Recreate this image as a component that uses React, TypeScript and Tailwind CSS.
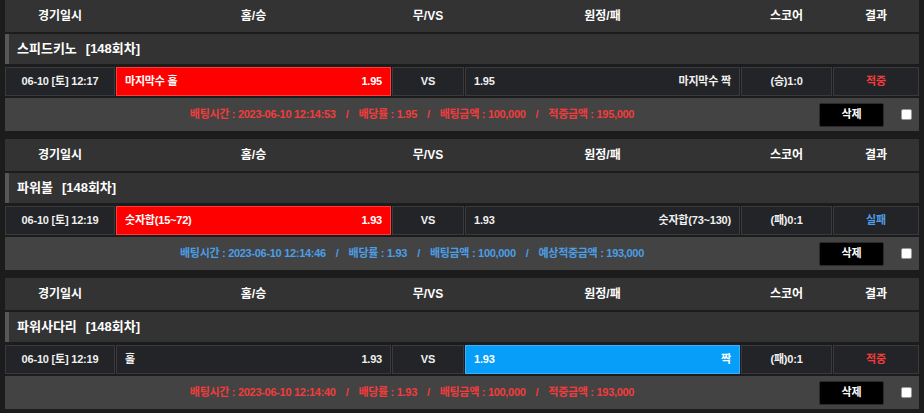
import React from 'react';

type Bet = {
  game: string;
  round: string;
  date: string;
  home: string;
  homeOdds: string;
  away: string;
  awayOdds: string;
  pick: 'home' | 'away';
  score: string;
  result: string;
  won: boolean;
  betTime: string;
  odds: string;
  amount: string;
  payoutLabel: string;
  payout: string;
};

const bets: Bet[] = [
  {
    game: '스피드키노',
    round: '[148회차]',
    date: '06-10 [토] 12:17',
    home: '마지막수 홀',
    homeOdds: '1.95',
    away: '마지막수 짝',
    awayOdds: '1.95',
    pick: 'home',
    score: '(승)1:0',
    result: '적중',
    won: true,
    betTime: '2023-06-10 12:14:53',
    odds: '1.95',
    amount: '100,000',
    payoutLabel: '적중금액',
    payout: '195,000',
  },
  {
    game: '파워볼',
    round: '[148회차]',
    date: '06-10 [토] 12:19',
    home: '숫자합(15~72)',
    homeOdds: '1.93',
    away: '숫자합(73~130)',
    awayOdds: '1.93',
    pick: 'home',
    score: '(패)0:1',
    result: '실패',
    won: false,
    betTime: '2023-06-10 12:14:46',
    odds: '1.93',
    amount: '100,000',
    payoutLabel: '예상적중금액',
    payout: '193,000',
  },
  {
    game: '파워사다리',
    round: '[148회차]',
    date: '06-10 [토] 12:19',
    home: '홀',
    homeOdds: '1.93',
    away: '짝',
    awayOdds: '1.93',
    pick: 'away',
    score: '(패)0:1',
    result: '적중',
    won: true,
    betTime: '2023-06-10 12:14:40',
    odds: '1.93',
    amount: '100,000',
    payoutLabel: '적중금액',
    payout: '193,000',
  },
];

const cols = ['w-[110px]', 'w-[275px]', 'w-[72px]', 'w-[275px]', 'w-[91px]', 'flex-1'];

function HeaderRow() {
  const labels = ['경기일시', '홈/승', '무/VS', '원정/패', '스코어', '결과'];
  return (
    <div className="flex gap-[1px] h-[32px] bg-[#333333] text-[12px] font-bold text-white">
      {labels.map((l, i) => (
        <div key={l} className={`${cols[i]} flex items-center justify-center`}>{l}</div>
      ))}
    </div>
  );
}

function BetBlock({ bet }: { bet: Bet }) {
  const cell = 'h-[29px] flex items-center border border-[#383a3d] bg-[#232427]';
  const homeSel = bet.pick === 'home';
  const awaySel = bet.pick === 'away';
  const textColor = bet.won ? 'text-[#f23c3c]' : 'text-[#4c9ee6]';

  return (
    <div className="flex flex-col">
      <HeaderRow />
      <div className="mt-[2px] h-[30px] bg-[#333333] border-l-[4px] border-[#575757] flex items-center pl-[8px] text-[13px] font-bold text-white">
        <span>{bet.game}</span>
        <span className="ml-[9px]">{bet.round}</span>
      </div>
      <div className="mt-[3px] flex gap-[1px] text-[11px] font-bold tracking-[-0.2px] text-[#f0f0f0]">
        <div className={`${cols[0]} ${cell} justify-center`}>{bet.date}</div>
        <div className={`${cols[1]} ${homeSel ? 'h-[29px] flex items-center border border-[#ff3c3c] bg-[#ff0000] text-white' : cell} justify-between px-[8px]`}>
          <span>{bet.home}</span>
          <span>{bet.homeOdds}</span>
        </div>
        <div className={`${cols[2]} ${cell} justify-center`}>VS</div>
        <div className={`${cols[3]} ${awaySel ? 'h-[29px] flex items-center border border-[#3bb0ff] bg-[#069ef8] text-white' : cell} justify-between px-[8px]`}>
          <span>{bet.awayOdds}</span>
          <span>{bet.away}</span>
        </div>
        <div className={`${cols[4]} ${cell} justify-center`}>{bet.score}</div>
        <div className={`${cols[5]} ${cell} justify-center ${textColor}`}>{bet.result}</div>
      </div>
      <div className="mt-[2px] h-[33px] bg-[#434343] flex items-center">
        <div className={`flex-1 flex items-center justify-center text-[11px] font-bold tracking-[-0.3px] ${textColor}`}>
          <span>배팅시간 : {bet.betTime}</span>
          <span className="mx-[10px]">/</span>
          <span>배당률 : {bet.odds}</span>
          <span className="mx-[10px]">/</span>
          <span>배팅금액 : {bet.amount}</span>
          <span className="mx-[10px]">/</span>
          <span>{bet.payoutLabel} : {bet.payout}</span>
        </div>
        <button className="w-[65px] h-[24px] bg-black border border-[#2a2a2a] rounded-[2px] text-[11px] font-bold text-white">
          삭제
        </button>
        <span className="ml-[17px] mr-[7px] w-[11px] h-[11px] bg-white border border-[#9a9a9a] rounded-[2px]" />
      </div>
    </div>
  );
}

export default function App() {
  return (
    <div
      className="w-[924px] h-[413px] bg-[#1c1c1c] px-[5px] flex flex-col gap-[8px] overflow-hidden"
      style={{ fontFamily: '"Liberation Sans", "Noto Sans CJK KR", sans-serif' }}
    >
      {bets.map((b, i) => (
        <BetBlock key={i} bet={b} />
      ))}
    </div>
  );
}
